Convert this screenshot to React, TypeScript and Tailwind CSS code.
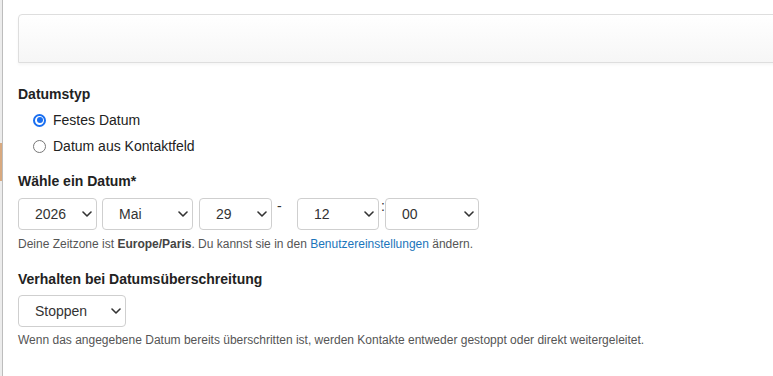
import { ReactNode } from 'react';

const FONT = 'font-["Liberation_Sans",Arial,Helvetica,sans-serif]';

function Chevron() {
  return (
    <svg
      aria-hidden="true"
      viewBox="0 0 10 6"
      className="pointer-events-none absolute right-[5px] top-1/2 h-[6px] w-[10px] -translate-y-1/2"
    >
      <path d="M1 1l4 4 4-4" fill="none" stroke="#333" strokeWidth="1.6" strokeLinecap="round" strokeLinejoin="round" />
    </svg>
  );
}

function Select({ value, width, options }: { value: string; width: string; options?: string[] }) {
  return (
    <div className={`relative h-[32px] shrink-0 ${width}`}>
      <select
        defaultValue={value}
        className="h-full w-full appearance-none rounded-[4px] border border-[#cfcfcf] bg-white pl-[16px] pr-6 text-[14px] text-[#333] outline-none"
      >
        {(options ?? [value]).map((o) => (
          <option key={o}>{o}</option>
        ))}
      </select>
      <Chevron />
    </div>
  );
}

function Radio({ checked, children }: { checked?: boolean; children: ReactNode }) {
  return (
    <label className="flex h-[20px] items-center gap-[7px] text-[14px] text-[#222]">
      {checked ? (
        <span className="grid h-[13px] w-[13px] place-items-center rounded-full border-2 border-[#1a6ff0] bg-white">
          <span className="h-[6px] w-[6px] rounded-full bg-[#1a6ff0]" />
        </span>
      ) : (
        <span className="h-[13px] w-[13px] rounded-full border border-[#777] bg-white" />
      )}
      {children}
    </label>
  );
}

export default function App() {
  return (
    <div className={`flex min-h-screen bg-white ${FONT}`}>
      <div className="flex w-[3px] shrink-0 flex-col border-r border-[#bdbdbd] bg-[#ececec]">
        <div className="h-[143px]" />
        <div className="h-[38px] bg-[#d8a97f]" />
      </div>
      <div className="flex-1 overflow-hidden pl-[15px]">
        <div className="mt-[14px] -mr-4 h-[49px] rounded-tl-[4px] border border-[#dedede] bg-gradient-to-b from-white to-[#f6f6f6] shadow-[0_2px_3px_rgba(0,0,0,0.04)]" />

        <h3 className="mt-[21px] text-[14px] font-bold leading-[20px] text-[#222]">Datumstyp</h3>
        <div className="mt-[6px] flex flex-col gap-[6px] pl-[15px]">
          <Radio checked>Festes Datum</Radio>
          <Radio>Datum aus Kontaktfeld</Radio>
        </div>

        <h3 className="mt-[15px] text-[14px] font-bold leading-[20px] text-[#222]">Wähle ein Datum*</h3>
        <div className="mt-[7px] flex items-start">
          <Select value="2026" width="w-[79px]" />
          <div className="w-[5px]" />
          <Select value="Mai" width="w-[91px]" />
          <div className="w-[6px]" />
          <Select value="29" width="w-[73px]" />
          <span className="w-[25px] pl-[5px] text-[14px] leading-[16px] text-[#333]">-</span>
          <Select value="12" width="w-[82px]" />
          <span className="w-[6px] pl-[2px] text-[14px] leading-[16px] text-[#333]">:</span>
          <Select value="00" width="w-[94px]" />
        </div>
        <p className="mt-[6px] text-[12px] leading-[16px] text-[#555]">
          Deine Zeitzone ist <b className="font-bold text-[#444]">Europe/Paris</b>. Du kannst sie in den{' '}
          <a href="#" className="text-[#1b75bb]">Benutzereinstellungen</a> ändern.
        </p>

        <h3 className="mt-[17px] text-[14px] font-bold leading-[20px] text-[#222]">Verhalten bei Datumsüberschreitung</h3>
        <div className="mt-[6px]">
          <Select value="Stoppen" width="w-[108px]" options={['Stoppen', 'Weiterleiten']} />
        </div>
        <p className="mt-[5px] text-[12px] leading-[16px] text-[#555]">
          Wenn das angegebene Datum bereits überschritten ist, werden Kontakte entweder gestoppt oder direkt weitergeleitet.
        </p>
      </div>
    </div>
  );
}
